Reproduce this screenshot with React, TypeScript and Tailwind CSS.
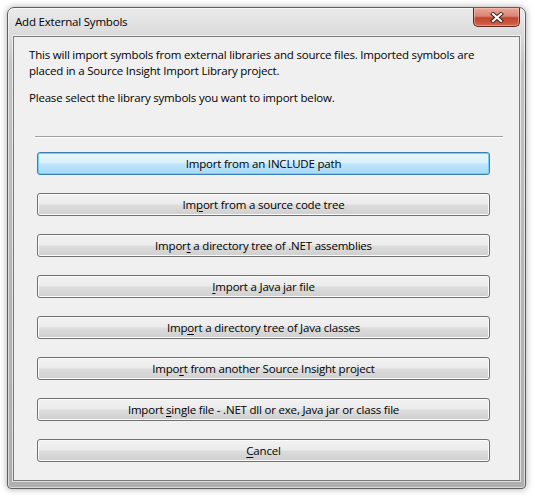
import React from 'react';

type Item = { pre: string; key?: string; post: string; focused?: boolean };

const items: Item[] = [
  { pre: 'Import from an INCLUDE path', post: '', focused: true },
  { pre: 'Im', key: 'p', post: 'ort from a source code tree' },
  { pre: 'Impor', key: 't', post: ' a directory tree of .NET assemblies' },
  { pre: '', key: 'I', post: 'mport a Java jar file' },
  { pre: 'Imp', key: 'o', post: 'rt a directory tree of Java classes' },
  { pre: 'Impo', key: 'r', post: 't from another Source Insight project' },
  { pre: 'Import ', key: 's', post: 'ingle file - .NET dll or exe, Java jar or class file' },
  { pre: '', key: 'C', post: 'ancel' },
];

const normalBtn =
  'border-[#707070] bg-[linear-gradient(to_bottom,#f2f2f2_0%,#ebebeb_48%,#dddddd_52%,#cfcfcf_100%)] shadow-[inset_0_0_0_1px_#fbfbfb]';
const focusBtn =
  'border-[#3c7fb1] bg-[linear-gradient(to_bottom,#eaf6fd_0%,#d9f0fc_48%,#bee6fd_52%,#a7d9f5_100%)] shadow-[inset_0_0_0_1px_#6fd0f8]';

const App = () => {
  return (
    <div
      className="w-[535px] h-[496px] bg-white pt-[7px] pl-[7px]"
      style={{ fontFamily: '"Open Sans", "Noto Sans", sans-serif' }}
    >
      {/* Window frame */}
      <div className="relative w-[519px] h-[482px] rounded-t-[7px] rounded-b-[4px] border border-[#5e5e5e] bg-[linear-gradient(to_bottom,#ebebeb_0%,#dcdcdc_5%,#c4c4c4_12%,#b6b6b6_60%,#afafaf_100%)] shadow-[0_0_7px_rgba(0,0,0,0.35),inset_0_0_0_1px_rgba(255,255,255,0.55)] flex flex-col">
        {/* Title bar */}
        <div className="h-[28px] flex items-center pl-[7px] text-[11.5px] tracking-[-0.2px] text-black">
          Add External Symbols
        </div>

        {/* Close button */}
        <div className="absolute top-0 right-[5px] w-[47px] h-[19px] rounded-b-[5px] border border-[#5b2a22] border-t-0 bg-[linear-gradient(to_bottom,#e9a899_0%,#d98574_45%,#c2452d_55%,#d5654b_100%)] shadow-[inset_0_0_0_1px_rgba(255,210,200,0.45)] flex items-center justify-center">
          <svg width="14" height="11" viewBox="0 0 14 11">
            <path d="M3 2 L11 9 M11 2 L3 9" stroke="#3d1b14" strokeWidth="4" strokeLinecap="square" />
            <path d="M3 2 L11 9 M11 2 L3 9" stroke="#ffffff" strokeWidth="2.2" strokeLinecap="square" />
          </svg>
        </div>

        {/* Client area */}
        <div className="ml-[5px] w-[507px] h-[445px] border border-[#7b7b7b] bg-[#f0f0f0] shadow-[0_0_0_1px_rgba(255,255,255,0.6)] flex flex-col text-[11.5px] tracking-[-0.2px] leading-[16px] text-black">
          <div className="pl-[15px] pt-[10px]">
            <p>
              This will import symbols from external libraries and source files. Imported symbols are
              <br />
              placed in a Source Insight Import Library project.
            </p>
            <p className="mt-[11px]">Please select the library symbols you want to import below.</p>
          </div>

          <div className="ml-[21px] mt-[30px] w-[468px] h-[2px] border-t border-[#a0a0a0] border-b border-b-white" />

          <div className="ml-[23px] mt-[14px] flex flex-col gap-[18px]">
            {items.map((it, i) => (
              <div
                key={i}
                className={`w-[453px] h-[23px] rounded-[3px] border flex items-center justify-center ${
                  it.focused ? focusBtn : normalBtn
                }`}
              >
                <span>
                  {it.pre}
                  {it.key && <span className="underline underline-offset-[2px]">{it.key}</span>}
                  {it.post}
                </span>
              </div>
            ))}
          </div>
        </div>
      </div>
    </div>
  );
};

export default App;
